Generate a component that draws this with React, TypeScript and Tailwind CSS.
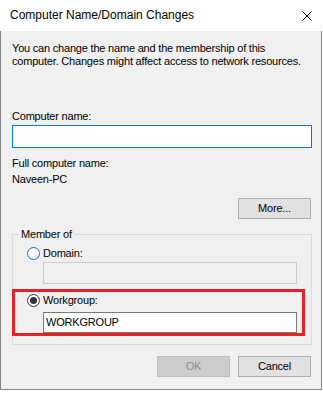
import React from 'react';

const Radio = ({ checked }: { checked?: boolean }) =>
  checked ? (
    <span className="w-[13px] h-[13px] rounded-full border border-[#333333] bg-white flex items-center justify-center">
      <span className="w-[7px] h-[7px] rounded-full bg-[#333333]" />
    </span>
  ) : (
    <span className="w-[13px] h-[13px] rounded-full border border-[#0078d7] bg-white" />
  );

const Button = ({ label, disabled }: { label: string; disabled?: boolean }) => (
  <button
    className={
      disabled
        ? 'w-[73px] h-[21px] bg-[#cccccc] border border-[#bfbfbf] text-[#8f8f8f] flex items-center justify-center'
        : 'w-[73px] h-[21px] bg-[#e1e1e1] border border-[#adadad] text-black flex items-center justify-center'
    }
  >
    {label}
  </button>
);

export default function App() {
  return (
    <div className="w-[323px] h-[394px] bg-white font-['Liberation_Sans',Arial,sans-serif] text-[11px] tracking-[-0.2px] leading-[13px] text-black">
      <div className="w-[322px] h-[390px] flex flex-col">
        <div className="h-[31px] bg-white flex items-center justify-between pl-[10px] pr-[10px]">
          <span className="text-[12px] tracking-normal">Computer Name/Domain Changes</span>
          <svg width="10" height="10" viewBox="0 0 10 10">
            <path d="M0.5 0.5 L9.5 9.5 M9.5 0.5 L0.5 9.5" stroke="#000" strokeWidth="1" />
          </svg>
        </div>

        <div className="flex-1 bg-[#f0f0f0] border-x border-b border-[#858585] pl-[11px] pr-[9px] flex flex-col">
          <p className="mt-[11px] whitespace-nowrap">
            You can change the name and the membership of this
            <br />
            computer. Changes might affect access to network resources.
          </p>

          <div className="mt-[42px]">Computer name:</div>
          <div className="mt-[2px] h-[23px] bg-white border border-[#0078d7]" />

          <div className="mt-[9px]">Full computer name:</div>
          <div className="mt-[3px]">Naveen-PC</div>

          <div className="mt-[12px] mr-[1px] flex justify-end">
            <Button label="More..." />
          </div>

          <fieldset className="mt-[9px] border border-[#dcdcdc] pl-[6px] pb-[8px]">
            <legend className="px-[2px] leading-[13px]">Member of</legend>

            <div className="mt-[5px] h-[14px] ml-[8px] flex items-center gap-[3px]">
              <Radio />
              <span>Domain:</span>
            </div>
            <div className="mt-[2px] ml-[24px] w-[254px] h-[22px] bg-[#f0f0f0] border border-[#cccccc]" />

            <div className="mt-[5px] ml-[-7px] w-[293px] border-[3px] border-[#e8202a] pl-[12px]">
              <div className="mt-[1px] h-[14px] flex items-center gap-[3px]">
                <Radio checked />
                <span>Workgroup:</span>
              </div>
              <div className="mt-[5px] ml-[16px] w-[254px] h-[21px] bg-white border border-[#7a7a7a] flex items-center pl-[2px]">
                WORKGROUP
              </div>
            </div>
          </fieldset>

          <div className="mt-[11px] mr-[1px] flex justify-end gap-[8px]">
            <Button label="OK" disabled />
            <Button label="Cancel" />
          </div>
        </div>
      </div>
    </div>
  );
}
